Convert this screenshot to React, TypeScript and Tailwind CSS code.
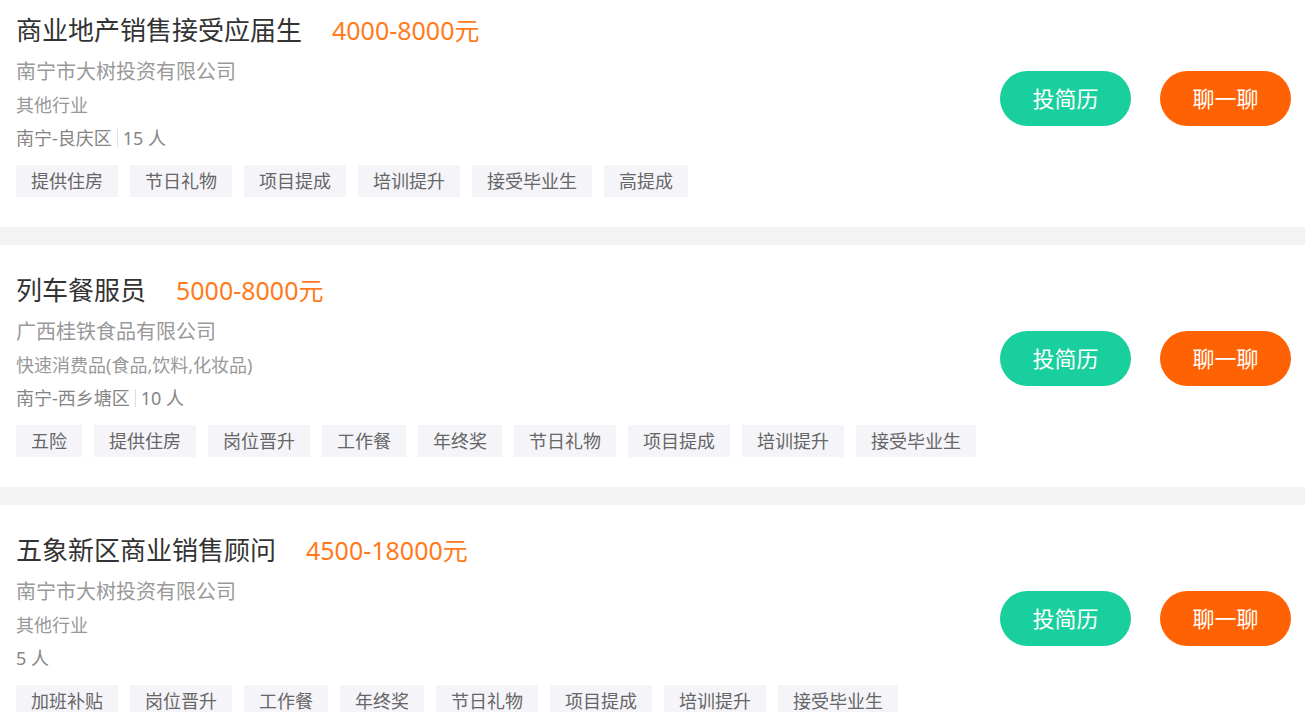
import React from "react";

type Job = {
  title: string;
  salary: string;
  company: string;
  industry: string;
  area?: string;
  count: string;
  tags: string[];
};

const jobs: Job[] = [
  {
    title: "商业地产销售接受应届生",
    salary: "4000-8000元",
    company: "南宁市大树投资有限公司",
    industry: "其他行业",
    area: "南宁-良庆区",
    count: "15 人",
    tags: ["提供住房", "节日礼物", "项目提成", "培训提升", "接受毕业生", "高提成"],
  },
  {
    title: "列车餐服员",
    salary: "5000-8000元",
    company: "广西桂铁食品有限公司",
    industry: "快速消费品(食品,饮料,化妆品)",
    area: "南宁-西乡塘区",
    count: "10 人",
    tags: ["五险", "提供住房", "岗位晋升", "工作餐", "年终奖", "节日礼物", "项目提成", "培训提升", "接受毕业生"],
  },
  {
    title: "五象新区商业销售顾问",
    salary: "4500-18000元",
    company: "南宁市大树投资有限公司",
    industry: "其他行业",
    count: "5 人",
    tags: ["加班补贴", "岗位晋升", "工作餐", "年终奖", "节日礼物", "项目提成", "培训提升", "接受毕业生"],
  },
];

function JobCard({ job }: { job: Job }) {
  return (
    <div className="flex bg-white pb-[30px] pl-4 pr-[14px] pt-[30px]">
      <div className="min-w-0 flex-1">
        <div className="flex h-[30px] items-center">
          <span className="text-[26px] leading-[30px] text-[#333]">{job.title}</span>
          <span className="ml-[30px] text-[25px] leading-[30px] text-[#ff7b1c]">{job.salary}</span>
        </div>
        <p className="mt-[12px] text-[20px] leading-[30px] text-[#999]">{job.company}</p>
        <p className="mt-px text-[18px] leading-[34px] text-[#999]">{job.industry}</p>
        <div className="flex items-center text-[18px] leading-[32px] text-[#858585]">
          {job.area ? (
            <>
              <span>{job.area}</span>
              <span className="mx-[5px] h-[18px] w-px bg-[#e0e0e0]" />
            </>
          ) : null}
          <span>{job.count}</span>
        </div>
        <div className="mt-[11px] flex gap-3">
          {job.tags.map((t) => (
            <span
              key={t}
              className="h-[32px] bg-[#f5f4f9] px-[15px] text-[18px] leading-[32px] text-[#666]"
            >
              {t}
            </span>
          ))}
        </div>
      </div>
      <div className="flex items-start gap-[29px] pt-[56px]">
        <button
          type="button"
          className="h-[55px] w-[131px] rounded-full bg-[#1acf9e] text-[22px] text-white"
        >
          投简历
        </button>
        <button
          type="button"
          className="h-[55px] w-[131px] rounded-full bg-[#ff6202] text-[22px] text-white"
        >
          聊一聊
        </button>
      </div>
    </div>
  );
}

export default function App() {
  return (
    <div
      className="h-[712px] w-full overflow-hidden bg-[#f3f3f3]"
      style={{ fontFamily: '"Noto Sans", "Noto Sans CJK SC", sans-serif' }}
    >
      <div className="-mt-[15px] flex flex-col gap-[18px]">
        {jobs.map((j) => (
          <JobCard key={j.title} job={j} />
        ))}
      </div>
    </div>
  );
}
